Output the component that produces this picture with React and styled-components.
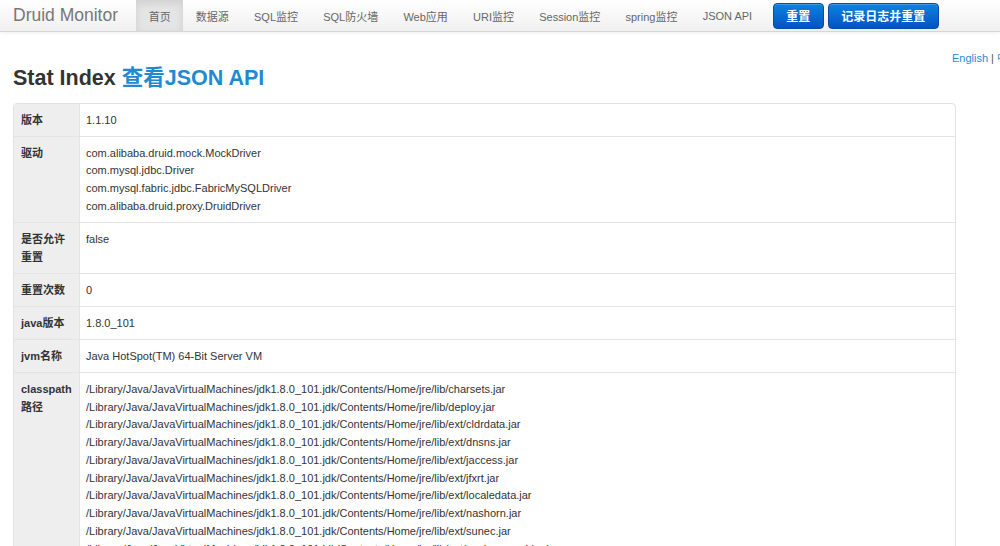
import React from 'react';
import styled, { createGlobalStyle } from 'styled-components';

const GlobalStyle = createGlobalStyle`
    html, body {
        margin: 0;
        padding: 0;
        background: #ffffff;
        overflow: hidden;
    }
    body {
        font-family: "Liberation Sans", "Noto Sans CJK SC", Arial, sans-serif;
        font-size: 11px;
        color: #333333;
    }
`;

const Navbar = styled.div`
    display: flex;
    align-items: center;
    height: 31px;
    padding-left: 13px;
    background: linear-gradient(#ffffff, #f0f0f0);
    border-bottom: 1px solid #d6d6d6;
    box-shadow: 0 1px 4px rgba(0, 0, 0, 0.065);
`;

const Brand = styled.span`
    font-size: 17.5px;
    color: #777777;
    margin-right: 18px;
`;

const NavItem = styled.a`
    display: flex;
    align-items: center;
    height: 31px;
    padding: 0 12.6px;
    color: #666666;
    font-size: 11px;
    text-decoration: none;
    background: ${(p) => (p.active ? '#e5e5e5' : 'transparent')};
    box-shadow: ${(p) => (p.active ? 'inset 0 3px 8px rgba(0, 0, 0, 0.1)' : 'none')};
`;

const ButtonGroup = styled.div`
    display: flex;
    gap: 4px;
    margin-left: 8px;
`;

const NavButton = styled.button`
    height: 26px;
    padding: 0 12.5px;
    font-family: inherit;
    font-size: 12px;
    font-weight: bold;
    color: #ffffff;
    background: linear-gradient(#0a84dc, #0452c4);
    border: 1px solid #0a4aa8;
    border-radius: 4px;
    box-shadow: inset 0 1px 0 rgba(255, 255, 255, 0.2);
`;

const Page = styled.div`
    width: 1006px;
    padding-left: 13px;
`;

const LangBar = styled.div`
    text-align: right;
    margin-top: 18px;
    line-height: 16px;
    color: #555555;
`;

const LangLink = styled.a`
    color: #2a8ad4;
    text-decoration: none;
`;

const Title = styled.h1`
    margin: 0 0 12px;
    font-size: 21.5px;
    line-height: 25px;
    font-weight: bold;
    color: #333333;
`;

const TitleLink = styled.a`
    color: #1e8ad2;
    text-decoration: none;
`;

const InfoTable = styled.div`
    width: 941px;
    border: 1px solid #e2e2e2;
    border-radius: 4px;
    overflow: hidden;
`;

const Row = styled.div`
    display: grid;
    grid-template-columns: 65px 1fr;
    border-top: ${(p) => (p.first ? 'none' : '1px solid #e4e4e4')};
    line-height: 17.75px;
`;

const Label = styled.div`
    background: #eeeeee;
    padding: 7.5px 8px 6.8px 7px;
    font-weight: bold;
    color: #333333;
`;

const Value = styled.div`
    padding: 7.5px 6px 6.8px;
    border-left: 1px solid #e4e4e4;
    color: #333333;
`;

const Line = styled.div`
    white-space: nowrap;
`;

const jre = '/Library/Java/JavaVirtualMachines/jdk1.8.0_101.jdk/Contents/Home/jre/lib/';

const classpath = [
    'charsets.jar',
    'deploy.jar',
    'ext/cldrdata.jar',
    'ext/dnsns.jar',
    'ext/jaccess.jar',
    'ext/jfxrt.jar',
    'ext/localedata.jar',
    'ext/nashorn.jar',
    'ext/sunec.jar',
    'ext/sunjce_provider.jar',
    'ext/sunpkcs11.jar',
    'ext/zipfs.jar',
    'javaws.jar',
    'jce.jar',
    'jfr.jar',
    'jfxswt.jar',
    'jsse.jar',
    'management-agent.jar',
    'plugin.jar',
    'resources.jar',
    'rt.jar',
].map((f) => jre + f);

const rows = [
    { label: '版本', values: ['1.1.10'] },
    {
        label: '驱动',
        values: [
            'com.alibaba.druid.mock.MockDriver',
            'com.mysql.jdbc.Driver',
            'com.mysql.fabric.jdbc.FabricMySQLDriver',
            'com.alibaba.druid.proxy.DruidDriver',
        ],
    },
    { label: '是否允许重置', values: ['false'] },
    { label: '重置次数', values: ['0'] },
    { label: 'java版本', values: ['1.8.0_101'] },
    { label: 'jvm名称', values: ['Java HotSpot(TM) 64-Bit Server VM'] },
    { label: 'classpath路径', values: classpath },
];

const navItems = ['首页', '数据源', 'SQL监控', 'SQL防火墙', 'Web应用', 'URI监控', 'Session监控', 'spring监控', 'JSON API'];

export default function App() {
    return (
        <React.Fragment>
            <GlobalStyle />
            <Navbar>
                <Brand>Druid Monitor</Brand>
                {navItems.map((item, i) => (
                    <NavItem key={item} active={i === 0 ? 1 : 0}>{item}</NavItem>
                ))}
                <ButtonGroup>
                    <NavButton>重置</NavButton>
                    <NavButton>记录日志并重置</NavButton>
                </ButtonGroup>
            </Navbar>
            <Page>
                <LangBar>
                    <LangLink>English</LangLink> | <LangLink>中文</LangLink>
                </LangBar>
                <Title>
                    Stat Index <TitleLink>查看JSON API</TitleLink>
                </Title>
                <InfoTable>
                    {rows.map((row, i) => (
                        <Row key={row.label} first={i === 0 ? 1 : 0}>
                            <Label>{row.label}</Label>
                            <Value>
                                {row.values.map((v) => (
                                    <Line key={v}>{v}</Line>
                                ))}
                            </Value>
                        </Row>
                    ))}
                </InfoTable>
            </Page>
        </React.Fragment>
    );
}
